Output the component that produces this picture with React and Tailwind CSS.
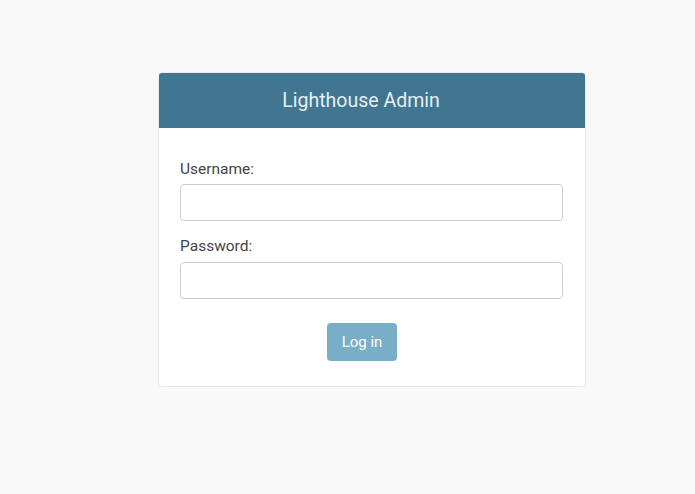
export default function App() {
  return (
    <div
      className="min-h-[494px] w-full bg-[#f8f8f8] pt-[72px] pl-[158px]"
      style={{ fontFamily: "Roboto, 'Liberation Sans', sans-serif" }}
    >
      <div className="w-[428px] rounded-[4px] border border-[#eaeaea] bg-white overflow-hidden">
        <div className="flex h-[55px] items-center justify-center bg-[#417690] pr-[22px]">
          <h1 className="text-[19.5px] font-normal text-[#e4f0f5]">Lighthouse Admin</h1>
        </div>
        <form className="px-[21px] pt-[30px] pb-[25px]" onSubmit={(e) => e.preventDefault()}>
          <label className="block text-[15.5px] leading-[22px] text-[#444]">Username:</label>
          <input
            type="text"
            className="mt-[4px] block h-[37px] w-[383px] rounded-[4px] border border-[#cccccc] bg-white px-2 outline-none"
          />
          <label className="mt-[14px] block text-[15.5px] leading-[22px] text-[#444]">Password:</label>
          <input
            type="password"
            className="mt-[5px] block h-[37px] w-[383px] rounded-[4px] border border-[#cccccc] bg-white px-2 outline-none"
          />
          <div className="mt-[24px] flex justify-center pr-[20px]">
            <button
              type="submit"
              className="h-[38px] w-[70px] rounded-[4px] bg-[#79aec8] text-[15px] font-normal text-white"
            >
              Log in
            </button>
          </div>
        </form>
      </div>
    </div>
  );
}
